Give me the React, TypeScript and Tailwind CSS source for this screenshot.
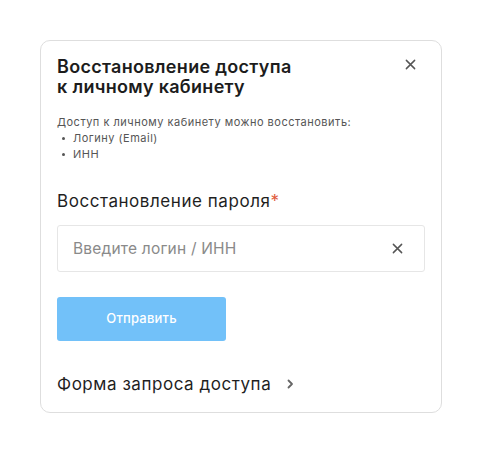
import React from "react";

export default function App() {
  return (
    <div
      className="w-[482px] h-[453px] bg-white pt-[40px] pl-[40px]"
      style={{ fontFamily: "Inter, 'Noto Sans', sans-serif" }}
    >
      <div className="w-[402px] h-[373px] border border-[#dedede] rounded-[10px] bg-white px-[16px] pt-[16px] flex flex-col">
        <div className="flex items-start justify-between">
          <h1 className="text-[18px] leading-[20px] font-semibold tracking-[0.3px] text-[#1c1c1c]">
            Восстановление доступа
            <br />к личному кабинету
          </h1>
          <button className="mt-[2px] mr-[9px] text-[#555]">
            <svg width="11" height="11" viewBox="0 0 12 12" fill="none">
              <path d="M1.5 1.5 L10.5 10.5 M10.5 1.5 L1.5 10.5" stroke="currentColor" strokeWidth="1.6" strokeLinecap="round" />
            </svg>
          </button>
        </div>
        <div className="mt-[17px] text-[11px] leading-[16px] tracking-[0.5px] text-[#555]">
          <p>Доступ к личному кабинету можно восстановить:</p>
          <ul className="pl-[5px]">
            <li className="flex items-center gap-[8px]">
              <span className="w-[3px] h-[3px] rounded-full bg-[#555]" />
              Логину (Email)
            </li>
            <li className="flex items-center gap-[8px]">
              <span className="w-[3px] h-[3px] rounded-full bg-[#555]" />
              ИНН
            </li>
          </ul>
        </div>
        <div className="mt-[29px] text-[17px] leading-[20px] tracking-[0.55px] text-[#1f1f1f]">
          Восстановление пароля<span className="text-[#e05a3a]">*</span>
        </div>
        <div className="mt-[14px] h-[47px] border border-[#e6e6e6] rounded-[3px] flex items-center justify-between pl-[15px] pr-[21px]">
          <span className="text-[15.5px] tracking-[0.2px] text-[#8a8a8a]">Введите логин / ИНН</span>
          <svg width="11" height="11" viewBox="0 0 12 12" fill="none" className="text-[#555]">
            <path d="M1.5 1.5 L10.5 10.5 M10.5 1.5 L1.5 10.5" stroke="currentColor" strokeWidth="1.6" strokeLinecap="round" />
          </svg>
        </div>
        <button className="mt-[25px] w-[169px] h-[44px] rounded-[3px] bg-[#72c1f9] text-white text-[13px] tracking-[0.2px] font-medium">
          Отправить
        </button>
        <div className="mt-[33px] flex items-center gap-[16px] text-[17px] leading-[20px] tracking-[0.55px] text-[#1f1f1f]">
          Форма запроса доступа
          <svg width="7" height="10" viewBox="0 0 7 10" fill="none" className="text-[#666]">
            <path d="M1.5 1.5 L5 5 L1.5 8.5" stroke="currentColor" strokeWidth="1.8" strokeLinecap="round" strokeLinejoin="round" />
          </svg>
        </div>
      </div>
    </div>
  );
}
